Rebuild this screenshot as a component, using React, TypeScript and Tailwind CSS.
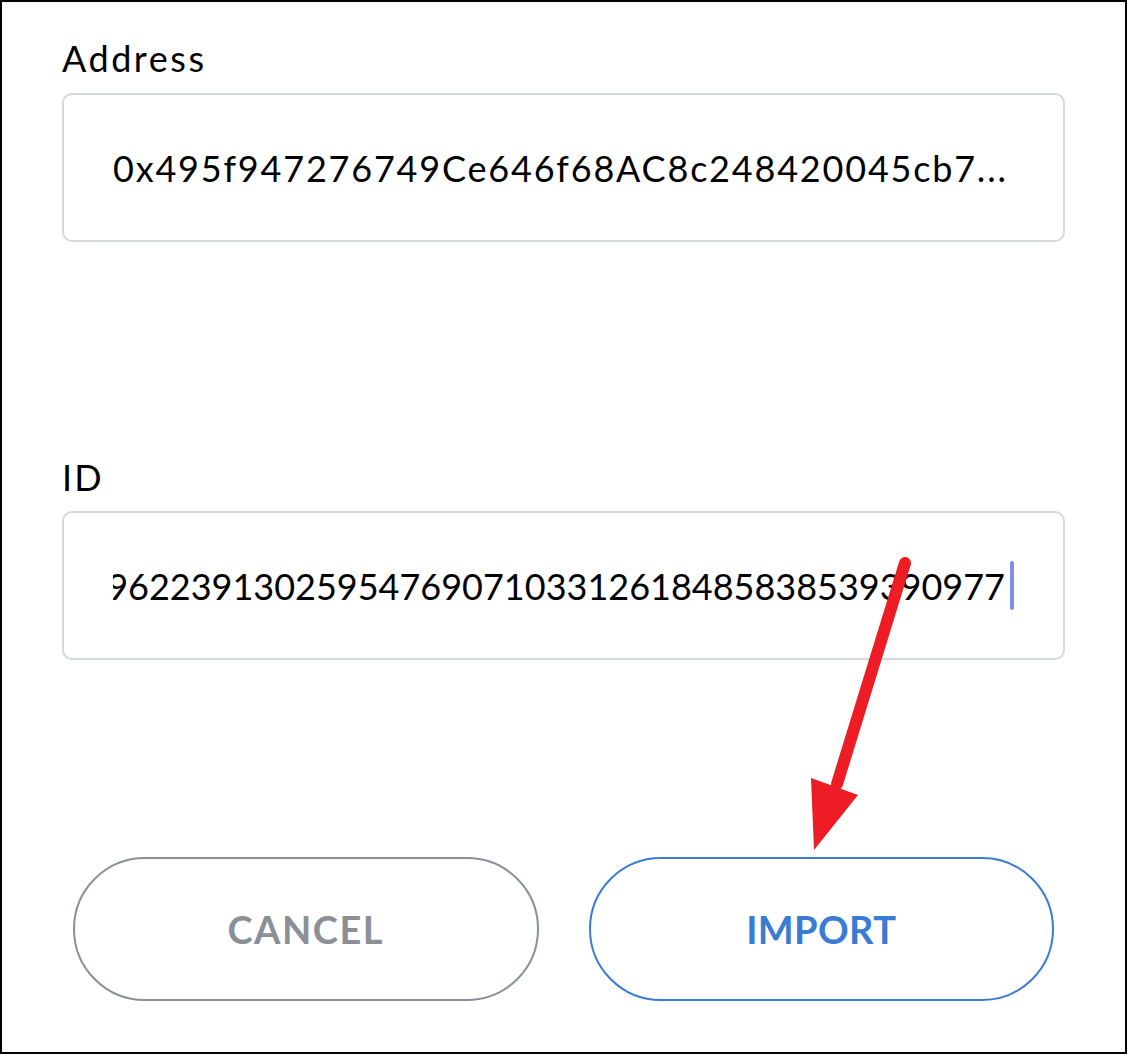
export default function App() {
  return (
    <div className="relative w-[1127px] h-[1054px] overflow-hidden border-2 border-black bg-white font-['Lato',sans-serif] text-black">
      <div className="px-[60px] pt-[36px]">
        {/* Address */}
        <label className="block text-[36px] leading-[40px] tracking-[0.07em] mb-[15px]">Address</label>
        <div className="h-[149px] rounded-[10px] border-2 border-[#d6d9dc] flex items-center pl-[49px] pr-[40px]">
          <span className="text-[36px] leading-none tracking-[0.05em] whitespace-nowrap">
            0x495f947276749Ce646f68AC8c248420045cb7...
          </span>
        </div>

        {/* ID */}
        <label className="block text-[36px] leading-[40px] tracking-[0.06em] mt-[215px] mb-[14px]">ID</label>
        <div className="h-[149px] rounded-[10px] border-2 border-[#d6d9dc] flex items-center pl-[49px] pr-[49px]">
          <div className="flex-1 overflow-hidden flex justify-end items-center">
            <span className="text-[36px] leading-none whitespace-nowrap">
              489622391302595476907103312618485838539390977
            </span>
            <span className="ml-[5px] w-[4px] h-[49px] rounded-full bg-[#7b8ff0] shrink-0" />
          </div>
        </div>

        {/* Buttons */}
        <div className="grid grid-cols-2 gap-[50px] mx-[11px] mt-[197px]">
          <button className="h-[144px] rounded-full border-2 border-[#8a8f98] text-[#8a8f98] text-[38px] font-bold tracking-[0.04em]">
            CANCEL
          </button>
          <button className="h-[144px] rounded-full border-2 border-[#3a7bd4] text-[#3a7bd4] text-[38px] font-bold tracking-[0.01em]">
            IMPORT
          </button>
        </div>
      </div>

      {/* red annotation arrow */}
      <svg className="absolute inset-0 pointer-events-none" width="1127" height="1054" viewBox="0 0 1127 1054">
        <line x1="903" y1="561" x2="835" y2="782" stroke="#ee1c25" strokeWidth="12" strokeLinecap="round" />
        <polygon points="809,776 856,793 812,848" fill="#ee1c25" />
      </svg>
    </div>
  );
}
